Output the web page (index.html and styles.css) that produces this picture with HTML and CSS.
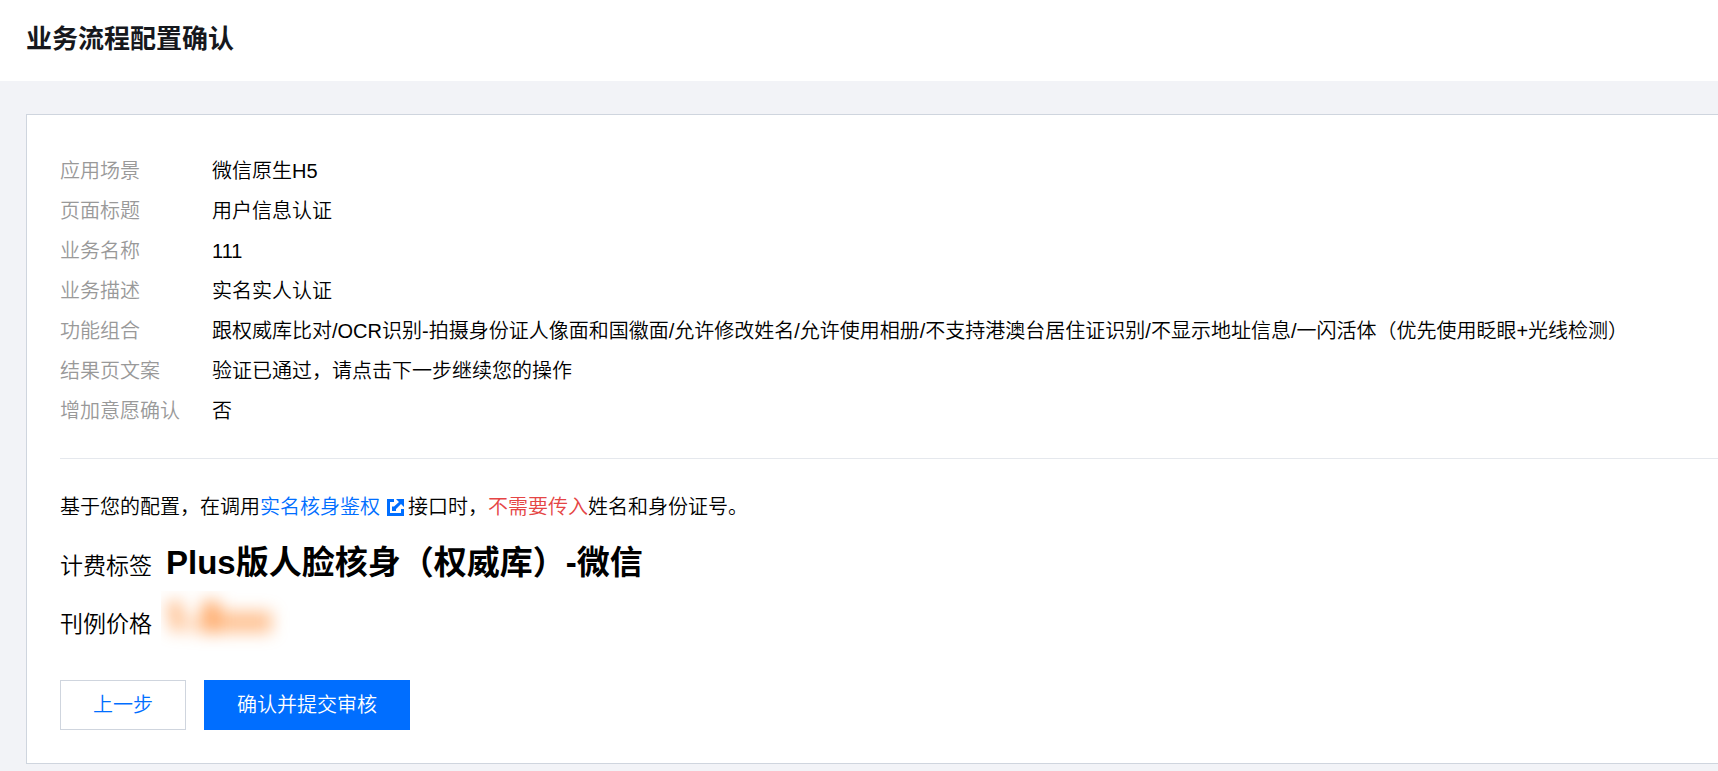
FILE: index.html
```html
<!DOCTYPE html>
<html lang="zh-CN">
<head>
<meta charset="utf-8">
<meta name="viewport" content="width=device-width, initial-scale=1">
<title>业务流程配置确认</title>
<link rel="stylesheet" href="styles.css">
</head>
<body>
<header class="page-header">
  <h1 class="page-title">业务流程配置确认</h1>
</header>
<main class="page-main">
  <section class="card">
    <dl class="details">
      <dt>应用场景</dt><dd>微信原生H5</dd>
      <dt>页面标题</dt><dd>用户信息认证</dd>
      <dt>业务名称</dt><dd>111</dd>
      <dt>业务描述</dt><dd>实名实人认证</dd>
      <dt>功能组合</dt><dd>跟权威库比对/OCR识别-拍摄身份证人像面和国徽面/允许修改姓名/允许使用相册/不支持港澳台居住证识别/不显示地址信息/一闪活体（优先使用眨眼+光线检测）</dd>
      <dt>结果页文案</dt><dd>验证已通过，请点击下一步继续您的操作</dd>
      <dt>增加意愿确认</dt><dd>否</dd>
    </dl>
    <hr class="divider">
    <p class="note">基于您的配置，在调用<a class="link" href="#">实名核身鉴权<svg class="link-icon" viewBox="0 0 17 17" aria-hidden="true"><path fill="#006eff" d="M0 0h7v3H3v11h11v-4h3v7H0z"/><path fill="#006eff" d="M9 0h8v8l-3-3-5 5v2H5V7.500h2L12 3z"/></svg></a>接口时，<span class="warn">不需要传入</span>姓名和身份证号。</p>
    <div class="billing">
      <span class="billing-label">计费标签</span>
      <strong class="billing-value">Plus版人脸核身（权威库）-微信</strong>
    </div>
    <div class="billing price">
      <span class="billing-label">刊例价格</span>
      <svg class="price-mask" viewBox="0 0 130 62" aria-hidden="true">
        <defs><filter id="soften" filterUnits="userSpaceOnUse" x="-30" y="-30" width="190" height="122" color-interpolation-filters="sRGB"><feGaussianBlur stdDeviation="8"/></filter></defs>
        <g fill="#ff7a14" filter="url(#soften)">
          <path opacity=".5" d="M5 14l7-4h9v30H9V18l-4 3z"/>
          <path opacity=".25" d="M24 24h16v18H24z"/>
          <path opacity=".6" d="M41 10h18v32H41z"/>
          <path opacity=".44" d="M59 20h52v22H59z"/>
        </g>
      </svg>
    </div>
    <div class="actions">
      <button class="btn" type="button">上一步</button>
      <button class="btn btn-primary" type="button">确认并提交审核</button>
    </div>
  </section>
</main>
</body>
</html>
```
FILE: styles.css
```css
* {
  box-sizing: border-box;
}

body {
  margin: 0;
  min-height: 100vh;
  background: #f2f3f7;
  color: #000;
  font-family: "Liberation Sans", "Noto Sans CJK SC", sans-serif;
  font-size: 20px;
  font-weight: 350;
  line-height: 40px;
}

.page-header {
  padding: 19px 26px 22px;
  background: #fff;
}

.page-title {
  margin: 0;
  color: #16181d;
  font-size: 26px;
  font-weight: 700;
  line-height: 40px;
}

.page-main {
  padding: 33px 0 7px 26px;
}

.card {
  padding: 36px 0 33px 33px;
  border: 1px solid #cfd5de;
  border-right: 0;
  background: #fff;
}

.details {
  display: grid;
  grid-template-columns: max-content 1fr;
  column-gap: 32px;
  margin: 0;
}

.details dt {
  color: #999;
}

.details dd {
  margin: 0;
}

.divider {
  height: 1px;
  margin: 27px 0 28px;
  border: 0;
  background: #e5e8ed;
}

.note {
  margin: 0;
}

.link {
  color: #006eff;
  text-decoration: none;
}

.link-icon {
  width: 17px;
  height: 17px;
  margin: 0 4px 0 7px;
  vertical-align: -2px;
}

.warn {
  color: #e54545;
}

.billing {
  display: flex;
  align-items: baseline;
  gap: 14px;
  margin-top: 7px;
  line-height: 58px;
}

.billing-label {
  font-size: 23px;
}

.billing-value {
  font-size: 33px;
  font-weight: 700;
}

.price {
  align-items: center;
  gap: 9px;
  margin-top: 0;
}

.price-mask {
  width: 130px;
  height: 62px;
  margin: -4px 0 0;
}

.actions {
  display: flex;
  gap: 18px;
  margin-top: 27px;
}

.btn {
  height: 50px;
  padding: 0 32px;
  border: 1px solid #cfd5de;
  background: #fff;
  color: #006eff;
  font: inherit;
  line-height: 48px;
  cursor: pointer;
}

.btn-primary {
  border-color: #006eff;
  background: #006eff;
  color: #fff;
}
```
